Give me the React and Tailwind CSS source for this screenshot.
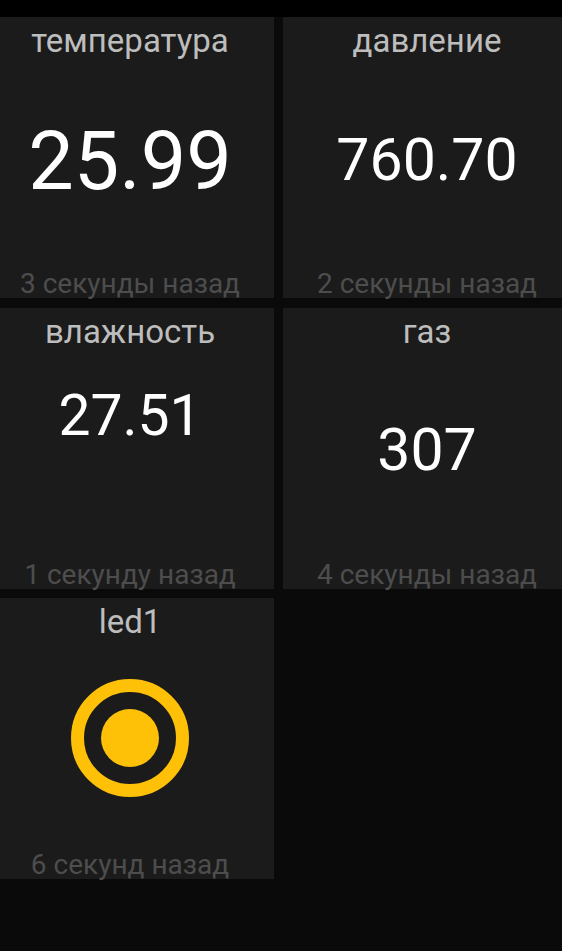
import React from 'react';

const tiles = [
    { id: 1, title: 'температура', value: '25.99', size: 'text-[81px]', pad: 'pb-[8px]', ago: '3 секунды назад' },
    { id: 2, title: 'давление', value: '760.70', size: 'text-[59px]', pad: 'pb-[13px]', ago: '2 секунды назад' },
    { id: 3, title: 'влажность', value: '27.51', size: 'text-[57px]', pad: 'pb-[81px]', ago: '1 секунду назад' },
    { id: 4, title: 'газ', value: '307', size: 'text-[59px]', pad: 'pb-[13px]', ago: '4 секунды назад' },
];

const Tile = ({ title, ago, pad, children }) => (
    <div className="h-[281px] bg-[#1b1b1b] flex flex-col items-center">
        <div className="mt-[4px] h-[40px] leading-[40px] text-[33px] text-[#bdbdbd]">{title}</div>
        <div className={`flex-1 flex items-center justify-center ${pad}`}>{children}</div>
        <div className="h-[28px] leading-[28px] text-[28px] text-[#4d4d4d] whitespace-nowrap">{ago}</div>
    </div>
);

const Led = () => (
    <div className="w-[118px] h-[118px] rounded-full border-[13px] border-[#ffc107] flex items-center justify-center">
        <div className="w-[58px] h-[58px] rounded-full bg-[#ffc107]" />
    </div>
);

export default function App() {
    return (
        <div
            className="min-h-[951px] bg-[#0a0a0a] overflow-hidden"
            style={{ fontFamily: 'Roboto, "Noto Sans", sans-serif' }}
        >
            <div className="h-[17px] bg-black" />
            <div className="w-[585px] -ml-[14px] grid grid-cols-[288px_288px] gap-x-[9px] gap-y-[9.5px]">
                {tiles.map((t) => (
                    <Tile key={t.id} title={t.title} ago={t.ago} pad={t.pad}>
                        <span className={`${t.size} leading-none text-white`}>{t.value}</span>
                    </Tile>
                ))}
                <Tile title="led1" ago="6 секунд назад" pad="pb-[18px]">
                    <Led />
                </Tile>
            </div>
        </div>
    );
}
